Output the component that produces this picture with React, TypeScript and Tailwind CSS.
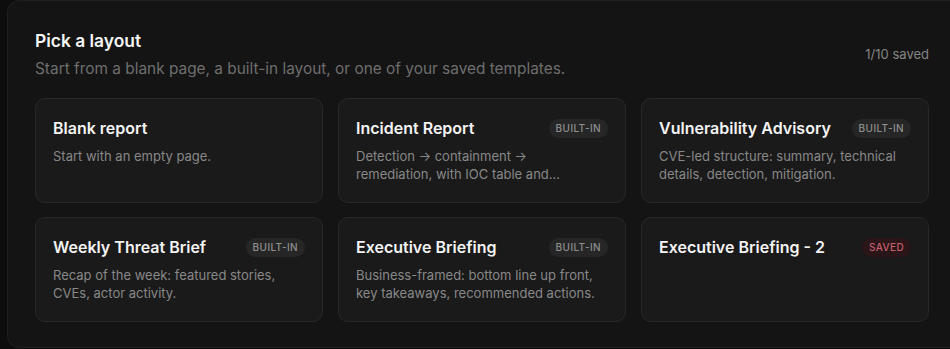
const layouts = [
  { title: "Blank report", desc: ["Start with an empty page."], badge: null },
  {
    title: "Incident Report",
    desc: ["Detection → containment →", "remediation, with IOC table and..."],
    badge: "built",
  },
  {
    title: "Vulnerability Advisory",
    desc: ["CVE-led structure: summary, technical details, detection, mitigation."],
    badge: "built",
  },
  {
    title: "Weekly Threat Brief",
    desc: ["Recap of the week: featured stories, CVEs, actor activity."],
    badge: "built",
  },
  {
    title: "Executive Briefing",
    desc: ["Business-framed: bottom line up front, key takeaways, recommended actions."],
    badge: "built",
  },
  { title: "Executive Briefing - 2", desc: [], badge: "saved" },
];

const Badge = ({ kind }: { kind: string }) => {
  if (kind === "saved") {
    return (
      <span className="shrink-0 rounded-full bg-[#2a1518] px-[7px] h-[19px] flex items-center text-[10px] font-medium tracking-[0.04em] text-[#c45f6b]">
        SAVED
      </span>
    );
  }
  return (
    <span className="shrink-0 rounded-full bg-[#262626] px-[7px] h-[19px] flex items-center text-[10px] font-medium tracking-[0.04em] text-[#8e8e8e]">
      BUILT-IN
    </span>
  );
};

export default function App() {
  return (
    <div
      className="w-full h-[349px] overflow-hidden bg-[#0d0d0d]"
      style={{ fontFamily: "Inter, 'Noto Sans', sans-serif" }}
    >
      <div className="ml-[7px] w-[960px] min-w-[960px] h-[348px] rounded-[12px] border border-[#1f1f1f] bg-[#141414] pl-[27px] pr-[37px] pt-[28px]">
        <div className="flex items-center justify-between">
          <div>
            <h2 className="text-[17.4px] leading-[24px] font-semibold text-[#f5f5f5]">
              Pick a layout
            </h2>
            <p className="mt-[5px] text-[15.4px] leading-[22px] text-[#6e6e6e]">
              Start from a blank page, a built-in layout, or one of your saved templates.
            </p>
          </div>
          <span className="text-[13px] text-[#858585]">1/10 saved</span>
        </div>

        <div className="mt-[18px] grid grid-cols-3 gap-x-[15px] gap-y-[14px]">
          {layouts.map((l) => (
            <div
              key={l.title}
              className="rounded-[10px] border border-[#282828] bg-[#1a1a1a] px-[17px] pt-[17px] pb-[19px] min-h-[105px]"
            >
              <div className="flex items-center justify-between gap-3">
                <h3 className="text-[16px] leading-[24px] font-semibold text-[#f3f3f3]">
                  {l.title}
                </h3>
                {l.badge && <Badge kind={l.badge} />}
              </div>
              {l.desc.length > 0 && (
                <p className="mt-[7px] text-[13px] leading-[18px] text-[#888888]">
                  {l.desc.map((line, i) => (
                    <span key={i} className={l.desc.length > 1 ? "block" : ""}>
                      {line}
                    </span>
                  ))}
                </p>
              )}
            </div>
          ))}
        </div>
      </div>
    </div>
  );
}
